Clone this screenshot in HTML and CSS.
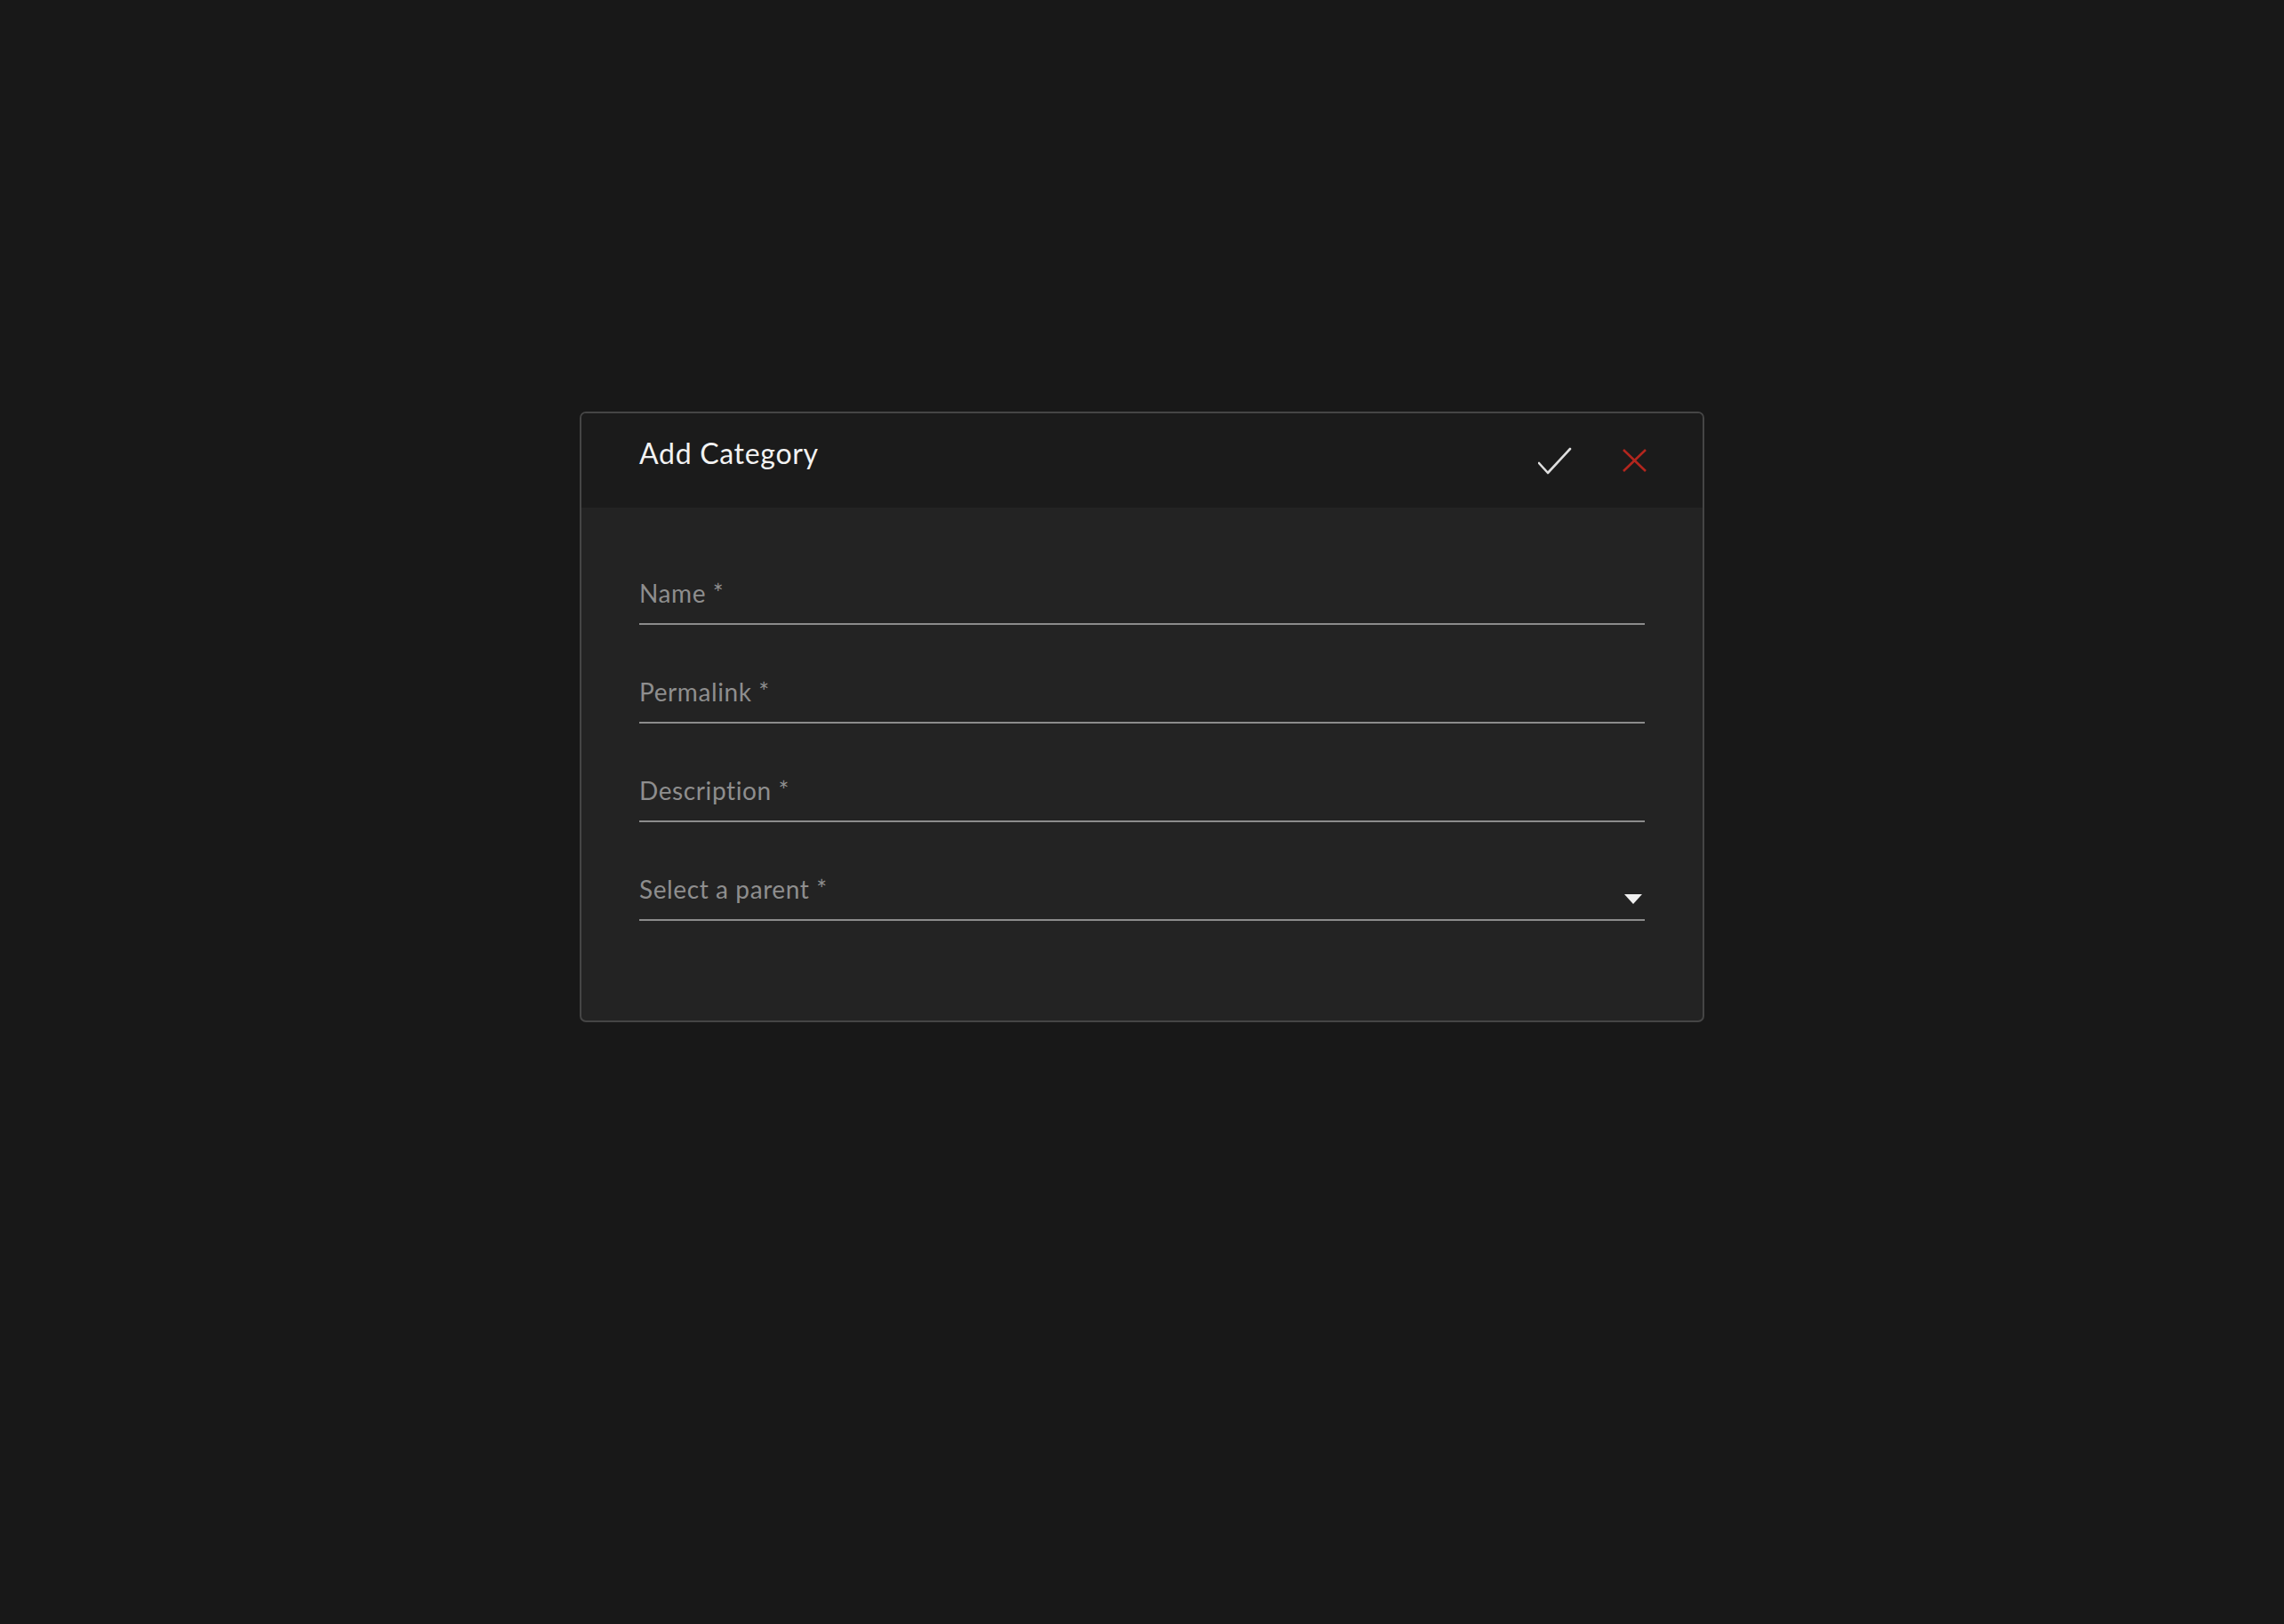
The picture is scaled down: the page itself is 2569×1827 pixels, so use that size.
FILE: index.html
```html
<!DOCTYPE html>
<html>
<head>
    <meta charset="utf-8">
    <title>Add Category</title>
    <link rel="stylesheet" href="styles.css">
</head>
<body>
    <div class="dialog">
        <div class="dialog-header">
            <h2 class="dialog-title">Add Category</h2>
            <div class="dialog-actions">
                <button class="icon-btn" title="Save">
                    <svg width="38" height="31" viewBox="0 0 38 31">
                        <path d="M1 18 L11 29 L36 2" fill="none" stroke="#dedede" stroke-width="2.6" stroke-linecap="round" stroke-linejoin="round"/>
                    </svg>
                </button>
                <button class="icon-btn" title="Close">
                    <svg width="27" height="26" viewBox="0 0 27 26">
                        <path d="M1 1 L26 25 M26 1 L1 25" fill="none" stroke="#b3261e" stroke-width="2.6"/>
                    </svg>
                </button>
            </div>
        </div>

        <form class="dialog-body">
            <div class="field">
                <span class="field-label">Name *</span>
            </div>
            <div class="field">
                <span class="field-label">Permalink *</span>
            </div>
            <div class="field">
                <span class="field-label">Description *</span>
            </div>
            <div class="field field-select">
                <span class="field-label">Select a parent *</span>
                <span class="caret"></span>
            </div>
        </form>
    </div>
</body>
</html>
```

FILE: styles.css
```css
html, body {
    margin: 0;
    padding: 0;
}
body {
    background: #181818;
    font-family: Lato, "Noto Sans", sans-serif;
    min-height: 1827px;
}
.dialog {
    width: 1261px;
    margin: 463px auto 0;
    border: 2px solid #454545;
    border-radius: 7px;
    background: #232323;
    overflow: hidden;
}
.dialog-header {
    height: 106px;
    background: #1b1b1b;
    display: flex;
    align-items: center;
    justify-content: space-between;
    padding: 0 63px 0 65px;
}
.dialog-title {
    margin: 0 0 17px;
    font-size: 32px;
    line-height: 40px;
    font-weight: 400;
    letter-spacing: 0.7px;
    color: #f2f2f2;
}
.dialog-actions {
    display: flex;
    align-items: center;
    gap: 57px;
}
.icon-btn {
    background: none;
    border: none;
    padding: 0;
    cursor: pointer;
    display: flex;
}
.dialog-body {
    padding: 76px 65px 112px;
    display: flex;
    flex-direction: column;
    gap: 55px;
}
.field {
    display: flex;
    align-items: flex-end;
    justify-content: space-between;
    padding-bottom: 14px;
    border-bottom: 2px solid #8c8c8c;
}
.field-label {
    font-size: 28px;
    line-height: 40px;
    letter-spacing: 0.6px;
    color: #8e8e8e;
}
.caret {
    width: 0;
    height: 0;
    border-left: 10px solid transparent;
    border-right: 10px solid transparent;
    border-top: 11px solid #f0f0f0;
    margin: 0 3px 3px 0;
}
```
